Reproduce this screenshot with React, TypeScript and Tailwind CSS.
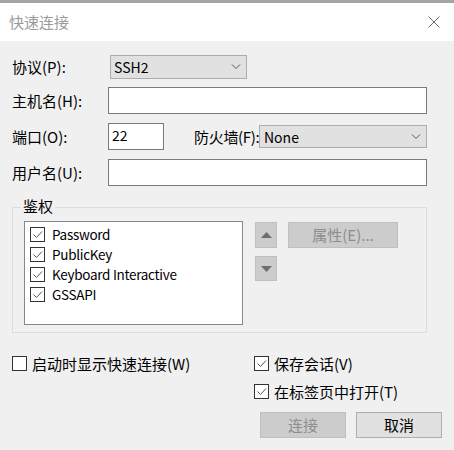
import React from 'react';

const Chevron = () => (
  <svg viewBox="0 0 10 6" className="h-[6px] w-[10px]" fill="none" stroke="#555555" strokeWidth="1">
    <path d="M1 0.5 L5 4.5 L9 0.5" />
  </svg>
);

function Box({ checked, className }: { checked: boolean; className: string }) {
  return (
    <span className={`relative shrink-0 border border-[#333333] bg-white ${className}`}>
      {checked && (
        <svg viewBox="0 0 13 13" className="absolute inset-0 h-full w-full" fill="none" stroke="#555555" strokeWidth="1">
          <path d="M2.5 6.5 L5.5 9.5 L11 3.5" />
        </svg>
      )}
    </span>
  );
}

const methods = ['Password', 'PublicKey', 'Keyboard Interactive', 'GSSAPI'];

export default function App() {
  return (
    <div className="h-[450px] w-[454px] overflow-hidden bg-[#f0f0f0] font-['Noto_Sans_CJK_SC',sans-serif] text-[15px] leading-[18px] text-black">
      <div className="h-[3px] bg-[#a5a5a5]" />
      <div className="flex h-[38px] items-center justify-between bg-white pl-[9px] pr-[14px]">
        <span className="text-[#9a9a9a]">快速连接</span>
        <svg viewBox="0 0 12 12" className="h-[12px] w-[12px]" fill="none" stroke="#6b6b6b" strokeWidth="1">
          <path d="M0.5 0.5 L11.5 11.5 M11.5 0.5 L0.5 11.5" />
        </svg>
      </div>

      <div className="flex flex-col px-[12px] pt-[14px]">
        <div className="flex h-[24px] items-center">
          <span className="w-[98px]">协议(P):</span>
          <div className="flex h-[24px] w-[137px] items-center justify-between border border-[#adadad] bg-[#e1e1e1] pl-[3px] pr-[5px] text-[14px]">
            <span>SSH2</span>
            <Chevron />
          </div>
        </div>

        <div className="mt-[8px] flex h-[27px] items-center">
          <span className="w-[96px]">主机名(H):</span>
          <div className="h-[27px] w-[319px] border border-[#7a7a7a] bg-white" />
        </div>

        <div className="mt-[9px] flex h-[27px] items-center">
          <span className="w-[96px]">端口(O):</span>
          <div className="h-[27px] w-[56px] border border-[#7a7a7a] bg-white pl-[3px] pt-[3px] text-[14px] leading-[16px]">22</div>
          <span className="ml-[30px] w-[65px] whitespace-nowrap tracking-[-0.3px]">防火墙(F):</span>
          <div className="flex h-[23px] w-[168px] items-center justify-between border border-[#adadad] bg-[#e1e1e1] pl-[4px] pr-[5px] text-[14px]">
            <span>None</span>
            <Chevron />
          </div>
        </div>

        <div className="mt-[9px] flex h-[27px] items-center">
          <span className="w-[96px]">用户名(U):</span>
          <div className="h-[27px] w-[319px] border border-[#7a7a7a] bg-white" />
        </div>

        <div className="relative mt-[21px] h-[126px] w-[415px] border border-[#dcdcdc]">
          <span className="absolute -top-[11px] left-[8px] bg-[#f0f0f0] px-[2px]">鉴权</span>
          <div className="flex items-start pl-[11px] pt-[13px]">
            <div className="h-[104px] w-[219px] border border-[#828790] bg-white pl-[5px] pt-[2px] text-[13.5px] tracking-[-0.3px]">
              {methods.map((m) => (
                <div key={m} className="flex h-[20px] items-center gap-[7px]">
                  <Box checked className="h-[15px] w-[15px]" />
                  <span>{m}</span>
                </div>
              ))}
            </div>
            <div className="ml-[12px] mt-[1px] flex flex-col">
              <div className="flex h-[26px] w-[22px] items-center justify-center border border-[#bfbfbf] bg-[#cccccc]">
                <svg viewBox="0 0 11 6" className="h-[6px] w-[11px]">
                  <path d="M0 6 L5.5 0 L11 6 Z" fill="#6d6d6d" />
                </svg>
              </div>
              <div className="mt-[8px] flex h-[25px] w-[22px] items-center justify-center border border-[#bfbfbf] bg-[#cccccc]">
                <svg viewBox="0 0 11 6" className="h-[6px] w-[11px]">
                  <path d="M0 0 L5.5 6 L11 0 Z" fill="#6d6d6d" />
                </svg>
              </div>
            </div>
            <div className="ml-[11px] mt-[1px] flex h-[26px] w-[110px] items-center justify-center border border-[#bfbfbf] bg-[#cccccc] text-[#8d8d8d]">
              属性(E)...
            </div>
          </div>
        </div>

        <div className="mt-[23px] flex">
          <div className="flex h-[15px] w-[242px] items-center">
            <Box checked={false} className="h-[15px] w-[15px]" />
            <span className="ml-[5px]">启动时显示快速连接(W)</span>
          </div>
          <div className="flex flex-col">
            <div className="flex h-[15px] items-center">
              <Box checked className="h-[15px] w-[15px]" />
              <span className="ml-[5px]">保存会话(V)</span>
            </div>
            <div className="mt-[13px] flex h-[15px] items-center">
              <Box checked className="h-[15px] w-[15px]" />
              <span className="ml-[5px]">在标签页中打开(T)</span>
            </div>
          </div>
        </div>

        <div className="mt-[13px] flex justify-end gap-[10px]">
          <div className="flex h-[26px] w-[86px] items-center justify-center border border-[#bfbfbf] bg-[#cccccc] text-[#8d8d8d]">连接</div>
          <div className="flex h-[26px] w-[86px] items-center justify-center border border-[#adadad] bg-[#e1e1e1]">取消</div>
        </div>
      </div>
    </div>
  );
}
